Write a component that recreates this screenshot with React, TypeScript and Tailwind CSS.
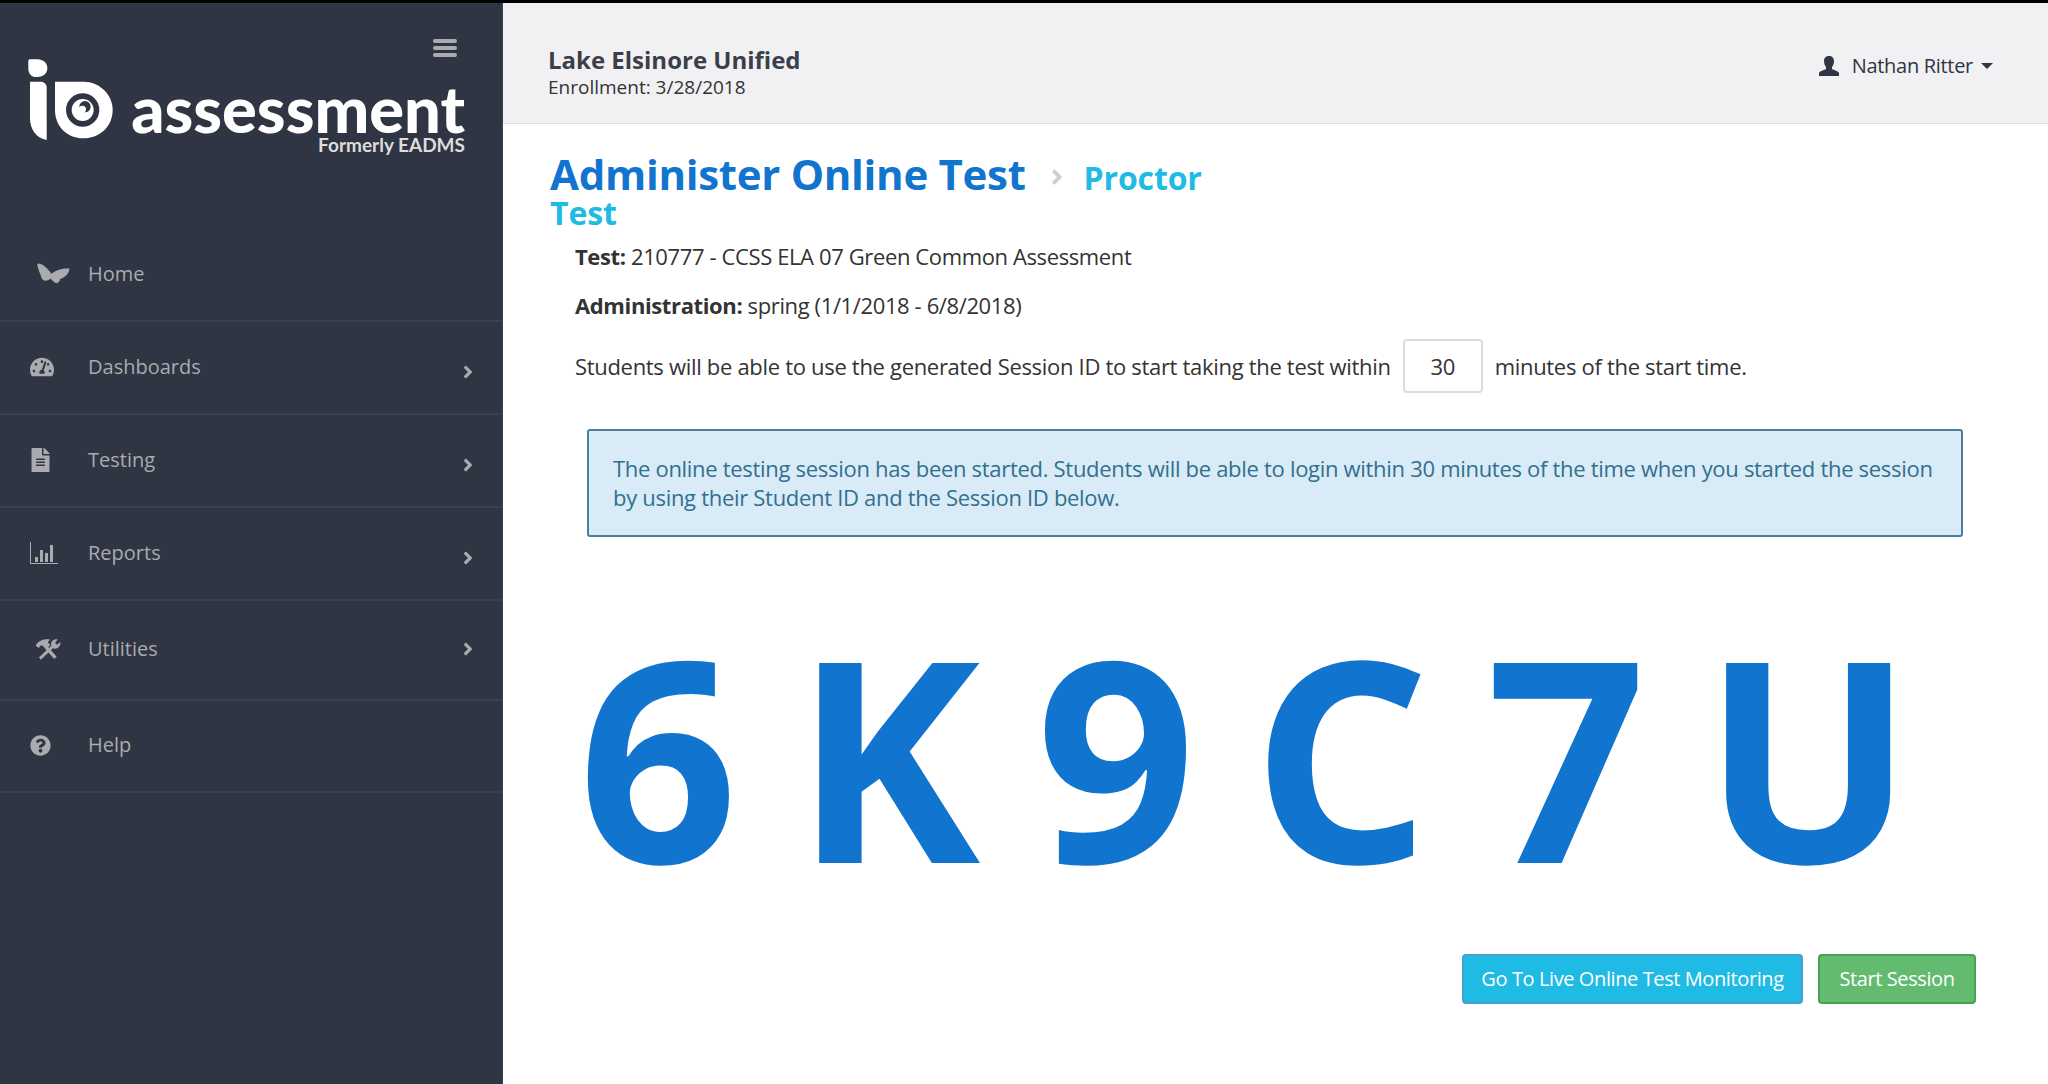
import { FaAngleRight, FaFileAlt, FaQuestionCircle, FaTachometerAlt } from 'react-icons/fa';

const Butterfly = () => (
  <svg viewBox="45 38 105 70" className="w-[35px] h-[23px] fill-[#a9abaf]">
    <path d="M48 44C55 38 68 48 78 58C84 64 88 70 91 74C100 64 125 55 146 58C146 70 135 85 118 90C116 100 108 106 100 100C96 97 92 92 88 88C80 96 68 98 62 88C60 78 50 62 48 44Z" />
  </svg>
);

const BarsIcon = () => (
  <svg viewBox="0 0 28 22" className="w-7 h-[22px] fill-[#a9abaf]">
    <path d="M0 0h1v21h27v1H0z" />
    <path d="M5 15h3v5H5zM10 8h3v12h-3zM15 11h3v9h-3zM20 3h3v17h-3z" />
  </svg>
);

const Tools = () => (
  <svg viewBox="40 25 85 72" className="w-[28px] h-[24px] fill-[#a9abaf]">
    <path d="M45 50C55 35 70 30 88 32L82 42L90 48L78 60L70 52L60 50L54 58Z" />
    <path d="M72 50L105 88" className="stroke-[#a9abaf] fill-none" strokeWidth="10" />
    <path d="M58 90L98 52" className="stroke-[#a9abaf] fill-none" strokeWidth="9" />
    <path d="M92 48C90 38 100 30 112 32L104 42L110 48L120 40C122 52 112 62 100 60Z" />
  </svg>
);

const Person = () => (
  <svg viewBox="0 0 20 20" className="w-5 h-5 fill-[#2f3542]">
    <path d="M10 0c3 0 5 2 5 5 0 2-1 5-2 6v2c2 1 6 2 7 4v3H0v-3c1-2 5-3 7-4v-2C6 10 5 7 5 5c0-3 2-5 5-5z" />
  </svg>
);

const LogoMark = () => (
  <svg viewBox="0 0 330 300" className="w-[110px] h-[100px] shrink-0">
    <path className="fill-white" d="M30 28H52C70 28 82 40 82 54C82 70 70 81 52 81H48C34 81 25 70 25 56V33C25 30 27 28 30 28Z" />
    <path className="fill-white" d="M30 95H62C72 95 80 102 80 112V270C50 265 30 240 30 205Z" />
    <path className="fill-white" d="M105 95H190C240 95 278 135 278 180C278 228 240 265 190 265C140 265 105 228 105 180Z" />
    <circle cx="188" cy="180" r="50" className="fill-[#2f3542]" />
    <circle cx="188" cy="180" r="33" className="fill-white" />
    <circle cx="195" cy="170" r="17" className="fill-[#2f3542]" />
    <circle cx="187" cy="178" r="11" className="fill-white" />
  </svg>
);

const items = [
  { label: 'Home', icon: <span className="ml-[6px]"><Butterfly /></span>, h: 'h-[93px]', chevron: '' },
  { label: 'Dashboards', icon: <FaTachometerAlt className="w-6 h-6 text-[#a9abaf]" />, h: 'h-[93px]', chevron: 'mt-[10px]' },
  { label: 'Testing', icon: <FaFileAlt className="w-[21px] h-6 text-[#a9abaf]" />, h: 'h-[93px]', chevron: 'mt-[10px]' },
  { label: 'Reports', icon: <BarsIcon />, h: 'h-[93px]', chevron: 'mt-[10px]' },
  { label: 'Utilities', icon: <span className="ml-[4px]"><Tools /></span>, h: 'h-[100px]', chevron: 'mt-0' },
  { label: 'Help', icon: <FaQuestionCircle className="w-[21px] h-[21px] text-[#a9abaf]" />, h: 'h-[92px]', chevron: '' },
];

export default function App() {
  return (
    <div className="w-[2048px] h-[1084px] flex flex-col overflow-hidden bg-white font-['Open_Sans',sans-serif] text-[#333]">
      <div className="h-[3px] bg-black shrink-0" />
      <div className="flex flex-1 min-h-0">
        <aside className="w-[503px] shrink-0 bg-[#2f3542] border-r border-[#3d4350] flex flex-col">
          <div className="h-[226px] shrink-0 relative">
            <div className="absolute right-[45px] top-[36px] w-6 flex flex-col gap-[3px]">
              <span className="h-[4px] rounded-sm bg-[#a9abaf]" />
              <span className="h-[4px] rounded-sm bg-[#a9abaf]" />
              <span className="h-[4px] rounded-sm bg-[#a9abaf]" />
            </div>
            <div className="pl-[20px] pt-[47px] flex items-start">
              <LogoMark />
              <div className="w-[335px] mt-[33px] flex flex-col items-end">
                <span className="font-['Lato',sans-serif] font-black text-[65px] leading-[50px] text-white">assessment</span>
                <span className="font-['Lato',sans-serif] font-bold text-[19px] leading-[18px] mt-[3px] text-[#dddddd]">Formerly EADMS</span>
              </div>
            </div>
          </div>
          <nav className="flex flex-col">
            {items.map((it) => (
              <div key={it.label} className={`${it.h} flex items-center border-b-2 border-[#3a404d] pb-[2px] pl-[30px] pr-[24px] text-[#a9abaf] text-[20px]`}>
                <span className="w-[58px] flex items-center shrink-0">{it.icon}</span>
                <span>{it.label}</span>
                {it.chevron && <FaAngleRight className={`ml-auto w-5 h-5 ${it.chevron}`} />}
              </div>
            ))}
          </nav>
        </aside>
        <main className="flex-1 min-w-0 flex flex-col">
          <header className="h-[121px] shrink-0 bg-[#f1f1f3] border-b border-[#dedede] flex items-center justify-between pt-[18px] pl-[45px] pr-[55px]">
            <div>
              <div className="text-[24px] leading-[30px] font-bold text-[#3a3f4a]">Lake Elsinore Unified</div>
              <div className="text-[19px] leading-[24px] text-[#333]">Enrollment: 3/28/2018</div>
            </div>
            <div className="flex items-center text-[20px] text-[#2f3542] -mt-[12px] tracking-[-0.3px]">
              <Person />
              <span className="ml-[13px]">Nathan Ritter</span>
              <span className="ml-[8px] w-0 h-0 border-x-[6px] border-x-transparent border-t-[6px] border-t-[#2f3542]" />
            </div>
          </header>
          <div className="pl-[47px] pr-[72px] pt-[36px] flex-1 flex flex-col">
            <div className="w-[690px] font-bold leading-[27.5px]">
              <span className="text-[42px] text-[#1174ce] tracking-[-0.3px]">Administer Online Test</span>
              <FaAngleRight className="inline w-6 h-6 ml-[19px] mr-[15px] -translate-y-[9px] text-[#cfcfcf]" />
              <span className="text-[32px] text-[#1fbbe4] tracking-[-0.15px]">Proctor Test</span>
            </div>
            <div className="pl-[25px] text-[22px] text-[#333] mt-[8px] tracking-[-0.38px]">
              <p className="leading-[30px]"><b>Test:</b> 210777 - CCSS ELA 07 Green Common Assessment</p>
              <p className="leading-[30px] mt-[19px]"><b>Administration:</b> spring (1/1/2018 - 6/8/2018)</p>
              <div className="mt-[19px] flex items-center tracking-[-0.31px]">
                <span>Students will be able to use the generated Session ID to start taking the test within</span>
                <span className="mx-3 w-[80px] h-[54px] border-2 border-[#dcdcdc] rounded flex items-center justify-center">30</span>
                <span>minutes of the start time.</span>
              </div>
            </div>
            <div className="ml-[37px] mt-[36px] w-[1376px] h-[108px] bg-[#d9ebf6] border-2 border-[#4a7f9f] rounded-[3px] px-[24px] py-[23px] text-[22px] leading-[29px] text-[#31708f] tracking-[-0.3px]">
              The online testing session has been started. Students will be able to login within 30 minutes of the time when you started the session by using their Student ID and the Session ID below.
            </div>
            <div className="ml-[28px] mt-[28px] text-[280px] leading-[380px] font-bold text-[#1174ce] whitespace-pre tracking-[-8.4px]">6 K 9 C 7 U</div>
            <div className="mt-[9px] flex justify-end gap-[15px]">
              <button className="h-[50px] w-[341px] bg-[#1fbbe4] border-2 border-[#4a9fd0] rounded text-white text-[20px] tracking-[-0.4px]">Go To Live Online Test Monitoring</button>
              <button className="h-[50px] w-[158px] bg-[#62bb6f] border-2 border-[#46a24f] rounded text-white text-[20px] tracking-[-0.4px]">Start Session</button>
            </div>
          </div>
        </main>
      </div>
    </div>
  );
}
